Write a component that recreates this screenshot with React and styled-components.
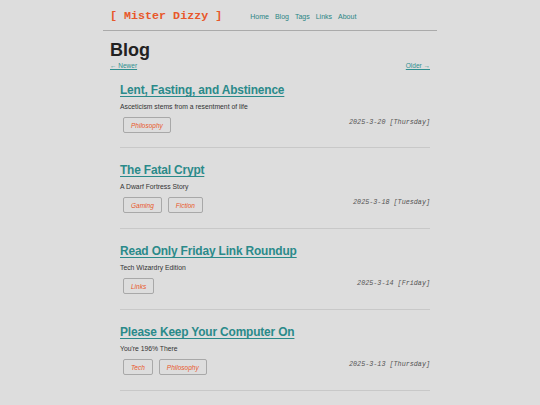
import React from "react";
import styled, { createGlobalStyle } from "styled-components";

const Global = createGlobalStyle`
  html, body { margin: 0; padding: 0; background: #dddddd; }
  body { font-family: "Liberation Sans", Arial, sans-serif; color: #222; }
`;

const Page = styled.div`
  width: 334px;
  margin: 0 auto;
`;

const Header = styled.header`
  display: flex;
  align-items: center;
  height: 31px;
  padding: 2px 7px 0;
  border-bottom: 1px solid #aaaaaa;
  box-sizing: border-box;
`;

const Logo = styled.a`
  font-family: "Liberation Mono", "Courier New", monospace;
  font-weight: bold;
  font-size: 11.7px;
  color: #e8572a;
  text-decoration: none;
  white-space: pre;
  margin-right: 28px;
`;

const Nav = styled.nav`
  display: flex;
  gap: 6px;
`;

const NavLink = styled.a`
  font-size: 7px;
  color: #2a8585;
  text-decoration: none;
`;

const Main = styled.main`
  padding: 0 7px;
`;

const Title = styled.h1`
  margin: 8px 0 0;
  font-size: 18px;
  font-weight: 700;
  line-height: 22px;
  color: #222;
`;

const Pager = styled.div`
  display: flex;
  justify-content: space-between;
  font-size: 6.5px;
  margin-top: 1px;
`;

const PagerLink = styled.a`
  color: #2f8f8f;
  text-decoration: underline;
`;

const Posts = styled.div`
  padding: 0 0 0 10px;
`;

const Post = styled.article`
  padding-top: ${(p) => (p.$first ? 13 : 14)}px;
  height: ${(p) => (p.$first ? 79 : 81)}px;
  box-sizing: border-box;
  border-bottom: 1px solid #c8c8c8;
`;

const PostTitle = styled.a`
  display: block;
  font-size: 11.9px;
  font-weight: 700;
  letter-spacing: -0.15px;
  line-height: 17px;
  color: #2a8a8a;
  text-decoration: underline;
  text-decoration-thickness: 1px;
  text-underline-offset: 2px;
`;

const Subtitle = styled.p`
  margin: 4px 0 0;
  font-size: 6.8px;
  color: #333;
`;

const Meta = styled.div`
  display: flex;
  justify-content: space-between;
  align-items: flex-start;
  margin-top: 7px;
`;

const Tags = styled.div`
  display: flex;
  gap: 6px;
  padding-left: 3px;
`;

const Tag = styled.span`
  display: inline-flex;
  align-items: center;
  height: 16px;
  padding: 0 7px;
  border: 1px solid #a8a8a8;
  border-radius: 2px;
  font-size: 6.5px;
  font-style: italic;
  color: #e8572a;
  box-sizing: border-box;
`;

const DateText = styled.span`
  font-family: "Liberation Mono", "Courier New", monospace;
  font-style: italic;
  font-size: 6.75px;
  color: #555;
  padding-top: 1px;
`;

const posts = [
  { title: "Lent, Fasting, and Abstinence", sub: "Asceticism stems from a resentment of life", tags: ["Philosophy"], date: "2025-3-20 [Thursday]" },
  { title: "The Fatal Crypt", sub: "A Dwarf Fortress Story", tags: ["Gaming", "Fiction"], date: "2025-3-18 [Tuesday]" },
  { title: "Read Only Friday Link Roundup", sub: "Tech Wizardry Edition", tags: ["Links"], date: "2025-3-14 [Friday]" },
  { title: "Please Keep Your Computer On", sub: "You're 196% There", tags: ["Tech", "Philosophy"], date: "2025-3-13 [Thursday]" },
];

export default function App() {
  return (
    <>
      <Global />
      <Page>
        <Header>
          <Logo href="#">[ Mister Dizzy ]</Logo>
          <Nav>
            {["Home", "Blog", "Tags", "Links", "About"].map((n) => (
              <NavLink key={n} href="#">{n}</NavLink>
            ))}
          </Nav>
        </Header>
        <Main>
          <Title>Blog</Title>
          <Pager>
            <PagerLink href="#">← Newer</PagerLink>
            <PagerLink href="#">Older →</PagerLink>
          </Pager>
          <Posts>
            {posts.map((p, i) => (
              <Post key={p.title} $first={i === 0}>
                <PostTitle href="#">{p.title}</PostTitle>
                <Subtitle>{p.sub}</Subtitle>
                <Meta>
                  <Tags>
                    {p.tags.map((t) => <Tag key={t}>{t}</Tag>)}
                  </Tags>
                  <DateText>{p.date}</DateText>
                </Meta>
              </Post>
            ))}
          </Posts>
        </Main>
      </Page>
    </>
  );
}
